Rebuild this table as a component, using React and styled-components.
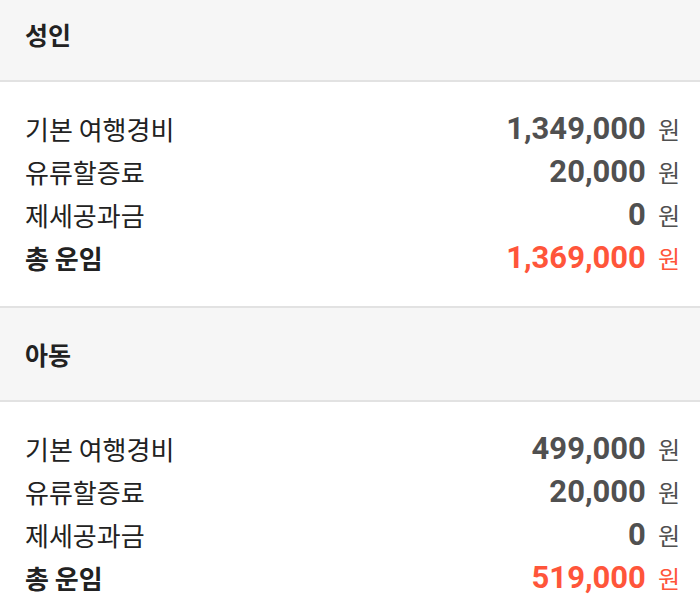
import React from "react";
import styled, { createGlobalStyle } from "styled-components";

const GlobalStyle = createGlobalStyle`
  body {
    margin: 0;
    background: #ffffff;
    font-family: "Noto Sans CJK KR", "Noto Sans", sans-serif;
    overflow: hidden;
  }
`;

const Page = styled.div`
  margin-top: -14px;
`;

const SectionHeader = styled.div`
  display: flex;
  align-items: center;
  height: 92px;
  padding: 0 25px;
  background: #f6f6f6;
  border-top: 2px solid #e2e2e2;
  border-bottom: 2px solid #e2e2e2;
  font-size: 25px;
  font-weight: 700;
  color: #222;
`;

const FareList = styled.div`
  display: flex;
  flex-direction: column;
  padding: 25px 20px 27px 25px;
`;

const FareRow = styled.div`
  display: flex;
  align-items: center;
  justify-content: space-between;
  height: 43px;
`;

const Label = styled.span`
  font-size: 26px;
  font-weight: ${(p) => (p.$total ? 700 : 400)};
  color: #222;
`;

const Amount = styled.span`
  display: flex;
  align-items: center;
  gap: 12px;
  color: ${(p) => (p.$total ? "#ff553a" : "#505050")};
`;

const Number = styled.span`
  font-family: Roboto, "Liberation Sans", sans-serif;
  font-weight: 700;
  font-size: 31px;
`;

const Won = styled.span`
  font-size: 24px;
  font-weight: 400;
`;

const sections = [
  {
    title: "성인",
    rows: [
      ["기본 여행경비", "1,349,000"],
      ["유류할증료", "20,000"],
      ["제세공과금", "0"],
      ["총 운임", "1,369,000", true],
    ],
  },
  {
    title: "아동",
    rows: [
      ["기본 여행경비", "499,000"],
      ["유류할증료", "20,000"],
      ["제세공과금", "0"],
      ["총 운임", "519,000", true],
    ],
  },
];

export default function App() {
  return (
    <Page>
      <GlobalStyle />
      {sections.map((s) => (
        <section key={s.title}>
          <SectionHeader>{s.title}</SectionHeader>
          <FareList>
            {s.rows.map(([label, value, total]) => (
              <FareRow key={label}>
                <Label $total={total}>{label}</Label>
                <Amount $total={total}>
                  <Number>{value}</Number>
                  <Won>원</Won>
                </Amount>
              </FareRow>
            ))}
          </FareList>
        </section>
      ))}
    </Page>
  );
}
